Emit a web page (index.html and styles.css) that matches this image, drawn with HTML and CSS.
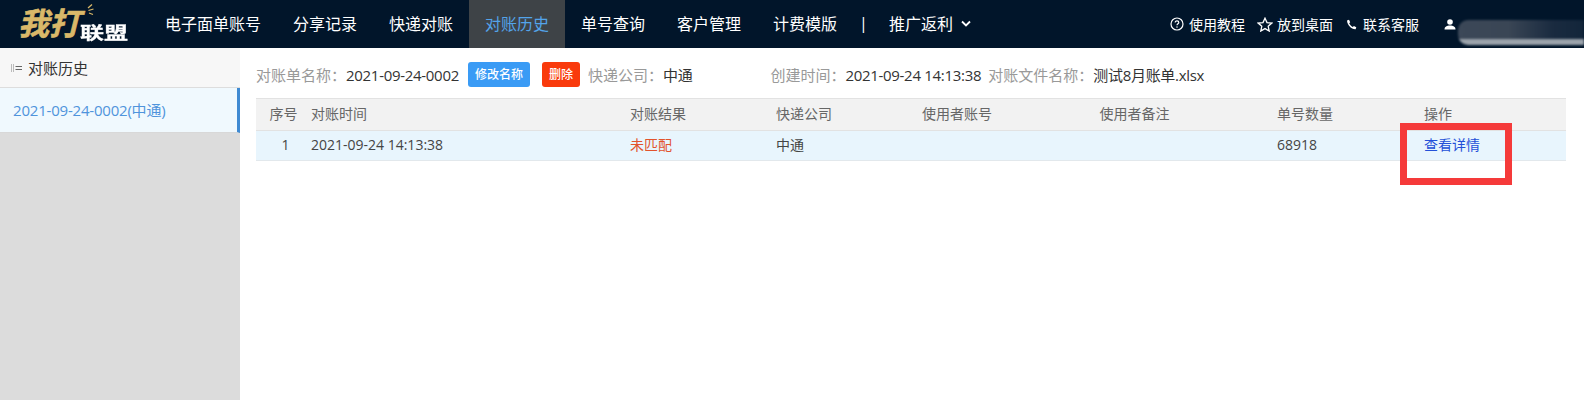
FILE: index.html
```html
<!DOCTYPE html>
<html lang="zh-CN">
<head>
  <meta charset="UTF-8">
  <meta name="viewport" content="width=device-width, initial-scale=1.0">
  <title>对账历史</title>
  <link rel="stylesheet" href="styles.css">
</head>
<body>
  <div class="header">
    <a class="logo">
      <span class="logo-main">我打</span><span class="logo-sub">联盟</span>
      <svg class="logo-spark" width="10" height="12" viewBox="0 0 10 12"><path d="M8 0.5 4 4M9.5 5 4.500 6.500M9 10.500 5 9" stroke="#d9b869" stroke-width="1.300" fill="none"/></svg>
    </a>
    <div class="nav">
      <a class="nav-item">电子面单账号</a>
      <a class="nav-item">分享记录</a>
      <a class="nav-item">快递对账</a>
      <a class="nav-item active">对账历史</a>
      <a class="nav-item">单号查询</a>
      <a class="nav-item">客户管理</a>
      <a class="nav-item">计费模版</a>
      <span class="nav-sep">|</span>
      <a class="nav-item nav-more">推广返利
        <svg width="10" height="7" viewBox="0 0 10 7"><path d="M1 1.500 5 5.500 9 1.500" stroke="#fff" stroke-width="1.800" fill="none"/></svg>
      </a>
    </div>
    <div class="tools">
      <a class="tool tool-help">
        <svg width="14" height="14" viewBox="0 0 14 14"><circle cx="7" cy="7" r="6" stroke="#fff" stroke-width="1.200" fill="none"/><path d="M5.200 5.500C5.200 3.400 8.800 3.500 8.800 5.500 8.800 6.800 7 6.800 7 8.300" stroke="#fff" stroke-width="1.200" fill="none"/><rect x="6.400" y="9.400" width="1.200" height="1.300" fill="#fff"/></svg>
        使用教程
      </a>
      <a class="tool tool-star">
        <svg width="16" height="15" viewBox="0 0 16 15"><path d="M8 1.200 10 5.600 14.800 6.100 11.200 9.300 12.200 14 8 11.600 3.800 14 4.800 9.300 1.200 6.100 6 5.600Z" stroke="#fff" stroke-width="1.300" fill="none"/></svg>
        放到桌面
      </a>
      <a class="tool tool-phone">
        <svg width="11" height="11" viewBox="0 0 11 11"><path d="M1 1.500 3 .8 4.200 3.300 3.200 4.300C3.800 5.800 5 7.200 6.800 8L7.900 6.900 10.300 8.300 9.600 10.300C5.500 10.600 1.300 6 1 1.500Z" fill="#fff"/></svg>
        联系客服
      </a>
      <a class="tool tool-user">
        <svg width="12" height="11" viewBox="0 0 12 11"><circle cx="6" cy="3" r="2.800" fill="#fff"/><path d="M.5 10.500C.5 7.500 3 6.500 6 6.500S11.500 7.500 11.500 10.500Z" fill="#fff"/></svg>
      </a>
    </div>
    <div class="user-blur"></div>
  </div>

  <div class="main">
    <div class="side">
      <div class="side-title">
        <svg width="12" height="10" viewBox="0 0 12 10"><path d="M.5 1V9M2.500 1V9" stroke="#bbb" fill="none"/><path d="M4.500 3.500H11M4.500 6.500H11" stroke="#666" fill="none"/></svg>
        对账历史
      </div>
      <div class="side-item">2021-09-24-0002(中通)</div>
    </div>

    <div class="content">
      <div class="info">
        <span class="info-label">对账单名称<span class="colon">：</span></span><span class="info-value">2021-09-24-0002</span>
        <a class="btn btn-blue">修改名称</a>
        <a class="btn btn-red">删除</a>
        <span class="info-label">快递公司<span class="colon">：</span></span><span class="info-value">中通</span>
        <span class="info-label created">创建时间<span class="colon">：</span></span><span class="info-value">2021-09-24 14:13:38</span>
        <span class="info-label file">对账文件名称<span class="colon">：</span></span><span class="info-value">测试8月账单.xlsx</span>
      </div>

      <table class="list">
        <colgroup>
          <col class="col-no"><col class="col-time"><col class="col-mid"><col class="col-mid"><col class="col-wide"><col class="col-wide"><col class="col-end"><col class="col-end">
        </colgroup>
        <thead>
          <tr>
            <th class="center">序号</th>
            <th>对账时间</th>
            <th>对账结果</th>
            <th>快递公司</th>
            <th>使用者账号</th>
            <th>使用者备注</th>
            <th>单号数量</th>
            <th>操作</th>
          </tr>
        </thead>
        <tbody>
          <tr>
            <td class="center">1</td>
            <td>2021-09-24 14:13:38</td>
            <td class="red">未匹配</td>
            <td>中通</td>
            <td></td>
            <td></td>
            <td>68918</td>
            <td><a class="link">查看详情</a></td>
          </tr>
        </tbody>
      </table>
      <div class="mark"></div>
    </div>
  </div>
</body>
</html>
```

FILE: styles.css
```css
* {
  box-sizing: border-box;
}

html, body {
  height: 100%;
}

body {
  margin: 0;
  font-family: "Open Sans", "Noto Sans CJK SC", sans-serif;
  font-size: 14px;
  color: #333;
  background: #fff;
  overflow: hidden;
}

.header {
  position: relative;
  display: flex;
  height: 48px;
  background: #01152a;
  color: #fff;
}

.logo {
  position: relative;
  display: flex;
  align-items: flex-end;
  width: 149px;
  height: 48px;
  padding: 0 0 8px 18px;
  flex: none;
}

.logo-main {
  font-size: 31px;
  line-height: 34px;
  font-weight: 700;
  font-style: italic;
  color: #d9b869;
  -webkit-text-stroke: .6px #d9b869;
}

.logo-sub {
  font-size: 24px;
  line-height: 20px;
  font-weight: 700;
  margin-left: 0;
  transform: scaleY(.7);
  transform-origin: bottom;
  -webkit-text-stroke: .4px #fff;
}

.logo-spark {
  position: absolute;
  left: 84px;
  top: 4px;
}

.nav {
  display: flex;
  align-items: stretch;
}

.nav-item {
  display: flex;
  align-items: center;
  padding: 0 16px 2px;
  font-size: 16px;
  color: #fff;
}

.nav-item.active {
  background: #3e4347;
  color: #53a4ea;
}

.nav-sep {
  display: flex;
  align-items: center;
  padding: 0 5px 2px 6px;
  font-size: 16px;
}

.nav-more svg {
  margin-left: 8px;
}

.tools {
  position: absolute;
  left: 1170px;
  top: 0;
  height: 48px;
  display: flex;
  align-items: center;
}

.tool {
  display: flex;
  align-items: center;
  font-size: 14px;
  color: #fff;
}

.tool-help svg {
  margin-right: 5px;
}

.tool-star {
  margin-left: 12px;
}

.tool-star svg {
  margin-right: 4px;
}

.tool-phone {
  margin-left: 13px;
}

.tool-phone svg {
  margin-right: 6px;
}

.tool-user {
  margin-left: 25px;
}

.user-blur {
  position: absolute;
  left: 1458px;
  top: 20px;
  width: 126px;
  height: 25px;
  border-radius: 10px 0 0 10px;
  background: linear-gradient(to bottom, transparent 76%, #9ba3ab 76%), linear-gradient(to right, #3c4858, #3a4655 40%, #1a2b40 75%, #12253a);
  filter: blur(1px);
}

.main {
  display: flex;
  height: calc(100% - 48px);
}

.side {
  width: 240px;
  flex: none;
  background: #dcdcdc;
}

.side-title {
  display: flex;
  align-items: center;
  height: 40px;
  padding-left: 11px;
  font-size: 15px;
  background: #f7f7f7;
  border-bottom: 1px solid #ddd;
  color: #333;
}

.side-title svg {
  margin-right: 5px;
}

.side-item {
  height: 45px;
  line-height: 44px;
  padding-left: 13px;
  font-size: 15px;
  letter-spacing: -.2px;
  color: #4f94dc;
  background: #f0f9fe;
  border-right: 3px solid #3f8ad2;
  border-bottom: 1px solid #d8d8d8;
}

.content {
  position: relative;
  flex: 1;
  padding: 0 18px 0 16px;
}

.info {
  display: flex;
  align-items: center;
  height: 50px;
  padding: 4px 0 1px;
  font-size: 15px;
  white-space: nowrap;
}

.info-label {
  color: #999;
}

.colon {
  font-family: "Noto Sans CJK TC", sans-serif;
}

.info-value {
  color: #333;
  letter-spacing: -.3px;
}

.btn {
  height: 25px;
  line-height: 25px;
  border-radius: 3px;
  text-align: center;
  font-size: 12px;
  font-weight: 500;
  color: #fff;
}

.btn-blue {
  width: 62px;
  margin-left: 9px;
  background: #3a9bf5;
}

.btn-red {
  width: 38px;
  margin: 0 8px 0 12px;
  background: #f93a0c;
}

.created {
  margin-left: 78px;
}

.file {
  margin-left: 7px;
}

.list {
  width: 100%;
  table-layout: fixed;
  border-collapse: collapse;
  font-size: 14px;
}

.col-no {
  width: 50px;
}

.col-time {
  width: 319px;
}

.col-mid {
  width: 146px;
}

.col-wide {
  width: 177.5px;
}

.col-end {
  width: 147px;
}

.list th {
  height: 32px;
  padding: 0 5px 3px;
  text-align: left;
  font-weight: 400;
  color: #666;
  background: #f2f2f2;
  border-top: 1px solid #e2e2e2;
  border-bottom: 1px solid #e2e2e2;
}

.list td {
  height: 30px;
  padding: 0 5px 3px;
  color: #444;
  background: #e8f5fd;
  border-bottom: 1px solid #e2e8ec;
}

.list th.center {
  text-align: center;
  padding-left: 10px;
}

.list td.center {
  text-align: center;
  padding-left: 14px;
}

.list .red {
  color: #e2532c;
}

.link {
  color: #2450d8;
}

.mark {
  position: absolute;
  left: 1160px;
  top: 75px;
  width: 112px;
  height: 62px;
  border: 7px solid #f53a3a;
}
```
